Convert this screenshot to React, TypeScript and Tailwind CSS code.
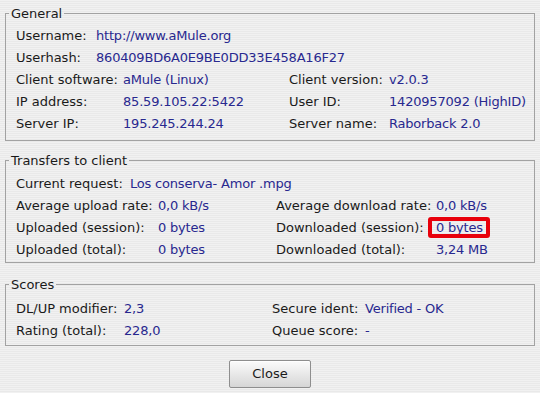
const label = "text-[#1a1a1a] whitespace-nowrap"
const value = "text-[#28288f] whitespace-nowrap tracking-[-0.2px]"

function Row({ cols, cells }: { cols: string; cells: React.ReactNode[] }) {
  return (
    <div className={`grid h-[22px] items-center ${cols}`}>
      {cells.map((c, i) => (
        <span key={i} className={i % 2 === 0 ? label : value}>
          {c}
        </span>
      ))}
    </div>
  )
}

function Group({
  title,
  className,
  children,
}: {
  title: string
  className: string
  children: React.ReactNode
}) {
  return (
    <fieldset className={`mx-[5px] border border-[#a2a2a2] pl-[10px] ${className}`}>
      <legend className="-ml-[7px] px-[2px] leading-[15px] text-[#1a1a1a]">{title}</legend>
      {children}
    </fieldset>
  )
}

export default function App() {
  const gen = "grid-cols-[107px_166px_100px_1fr]"
  const tr = "grid-cols-[142px_118px_160px_1fr]"
  const sc = "grid-cols-[108px_148px_93px_1fr]"

  return (
    <div
      className="h-[393px] w-[540px] overflow-hidden bg-[repeating-linear-gradient(to_bottom,#f1f1f1_0px,#f1f1f1_1px,#e9e9e9_1px,#e9e9e9_2px)] text-[13px] pt-[6px]"
      style={{ fontFamily: '"DejaVu Sans", Verdana, sans-serif' }}
    >
      <Group title="General" className="pt-[4px] pb-[5px]">
        <Row cols="grid-cols-[80px_1fr]" cells={["Username:", "http://www.aMule.org"]} />
        <Row cols="grid-cols-[80px_1fr]" cells={["Userhash:", "860409BD6A0E9BE0DD33E458A16F27"]} />
        <Row cols={gen} cells={["Client software:", "aMule (Linux)", "Client version:", "v2.0.3"]} />
        <Row cols={gen} cells={["IP address:", "85.59.105.22:5422", "User ID:", "1420957092 (HighID)"]} />
        <Row cols={gen} cells={["Server IP:", "195.245.244.24", "Server name:", "Raborback 2.0"]} />
      </Group>

      <Group title="Transfers to client" className="mt-[12px] pt-[5px] pb-[1px]">
        <Row cols="grid-cols-[114px_1fr]" cells={["Current request:", "Los conserva- Amor .mpg"]} />
        <Row cols={tr} cells={["Average upload rate:", "0,0 kB/s", "Average download rate:", "0,0 kB/s"]} />
        <div className={`grid h-[22px] items-center ${tr}`}>
          <span className={label}>Uploaded (session):</span>
          <span className={value}>0 bytes</span>
          <span className={label}>Downloaded (session):</span>
          <span className="relative">
            <span className={value}>0 bytes</span>
            <span className="absolute -left-[8px] -top-[1px] h-[21px] w-[62px] rounded-[3px] border-[4px] border-[#e8000b]" />
          </span>
        </div>
        <Row cols={tr} cells={["Uploaded (total):", "0 bytes", "Downloaded (total):", "3,24 MB"]} />
      </Group>

      <Group title="Scores" className="mt-[14px] pt-[6px] pb-[3px]">
        <Row cols={sc} cells={["DL/UP modifier:", "2,3", "Secure ident:", "Verified - OK"]} />
        <Row cols={sc} cells={["Rating (total):", "228,0", "Queue score:", "-"]} />
      </Group>

      <div className="mt-[14px] flex justify-center">
        <button
          type="button"
          className="h-[28px] w-[82px] rounded-[2px] border border-[#8e8e8e] bg-gradient-to-b from-[#fbfbfb] to-[#d6d6d6] text-[13px] text-[#1a1a1a] shadow-[inset_0_1px_0_#ffffff]"
        >
          Close
        </button>
      </div>
    </div>
  )
}
